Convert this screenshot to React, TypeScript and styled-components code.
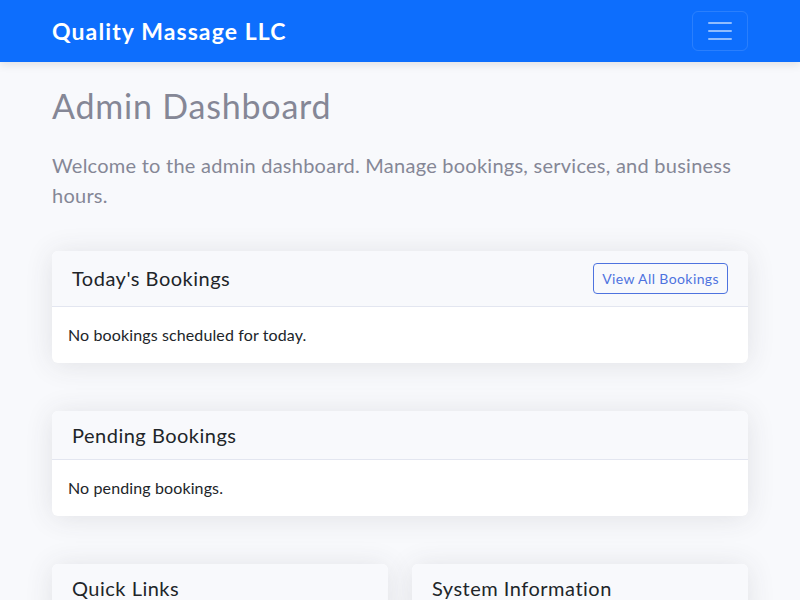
import React from "react";
import styled, { createGlobalStyle } from "styled-components";

const Global = createGlobalStyle`
  * { box-sizing: border-box; }
  html, body { margin: 0; padding: 0; }
  body {
    background: #f8f9fc;
    font-family: Lato, "Noto Sans", sans-serif;
    color: #212529;
  }
`;

const Navbar = styled.nav`
  height: 62px;
  background: #0d6efd;
  box-shadow: 0 3px 8px rgba(58, 59, 69, 0.12);
  display: flex;
  align-items: center;
  justify-content: space-between;
  padding: 0 52px;
  position: relative;
`;

const Brand = styled.a`
  color: #fff;
  font-size: 23px;
  font-weight: 700;
  letter-spacing: 1.1px;
  text-decoration: none;
`;

const Toggler = styled.button`
  width: 56px;
  height: 40px;
  border: 1px solid rgba(255, 255, 255, 0.12);
  border-radius: 6px;
  background: transparent;
  display: flex;
  align-items: center;
  justify-content: center;
  padding: 0;
`;

const Container = styled.main`
  padding: 0 52px;
`;

const Title = styled.h1`
  margin: 24px 0 0;
  font-size: 34px;
  font-weight: 400;
  letter-spacing: 0.8px;
  line-height: 1.2;
  color: #858796;
`;

const Lead = styled.p`
  margin: 23px 0 41px;
  font-size: 20px;
  font-weight: 400;
  letter-spacing: 0.25px;
  line-height: 30px;
  color: #858796;
`;

const Card = styled.section`
  background: #fff;
  border-radius: 6px;
  box-shadow: 0 2px 28px rgba(58, 59, 69, 0.12);
  margin-bottom: 48px;
  overflow: hidden;
`;

const CardHeader = styled.div`
  background: #f8f9fc;
  border-bottom: 1px solid #e3e6f0;
  padding: 12px 20px;
  display: flex;
  align-items: center;
  justify-content: space-between;
`;

const CardTitle = styled.h5`
  margin: 0;
  font-size: 20px;
  font-weight: 400;
  letter-spacing: 0.5px;
  line-height: 24px;
  color: #212529;
`;

const CardBody = styled.div`
  padding: 16px;
  font-size: 16px;
  letter-spacing: 0.12px;
  line-height: 24px;
  color: #212529;
`;

const OutlineButton = styled.button`
  height: 31px;
  padding: 0 8px;
  font-family: inherit;
  font-size: 14px;
  letter-spacing: 0.4px;
  color: #4e73df;
  background: transparent;
  border: 1px solid #4e73df;
  border-radius: 4px;
`;

const Row = styled.div`
  display: grid;
  grid-template-columns: 1fr 1fr;
  gap: 24px;
`;

const Hamburger = () => (
  <svg width="30" height="30" viewBox="0 0 30 30">
    <path
      d="M4 7h22M4 15h22M4 23h22"
      stroke="rgba(255,255,255,0.55)"
      strokeWidth="2"
      strokeLinecap="round"
    />
  </svg>
);

export default function App() {
  return (
    <>
      <Global />
      <Navbar>
        <Brand href="#">Quality Massage LLC</Brand>
        <Toggler aria-label="Toggle navigation">
          <Hamburger />
        </Toggler>
      </Navbar>
      <Container>
        <Title>Admin Dashboard</Title>
        <Lead>
          Welcome to the admin dashboard. Manage bookings, services, and business hours.
        </Lead>
        <Card>
          <CardHeader>
            <CardTitle>Today's Bookings</CardTitle>
            <OutlineButton>View All Bookings</OutlineButton>
          </CardHeader>
          <CardBody>No bookings scheduled for today.</CardBody>
        </Card>
        <Card>
          <CardHeader>
            <CardTitle>Pending Bookings</CardTitle>
          </CardHeader>
          <CardBody>No pending bookings.</CardBody>
        </Card>
        <Row>
          <Card>
            <CardHeader>
              <CardTitle>Quick Links</CardTitle>
            </CardHeader>
            <CardBody>&nbsp;</CardBody>
          </Card>
          <Card>
            <CardHeader>
              <CardTitle>System Information</CardTitle>
            </CardHeader>
            <CardBody>&nbsp;</CardBody>
          </Card>
        </Row>
      </Container>
    </>
  );
}
